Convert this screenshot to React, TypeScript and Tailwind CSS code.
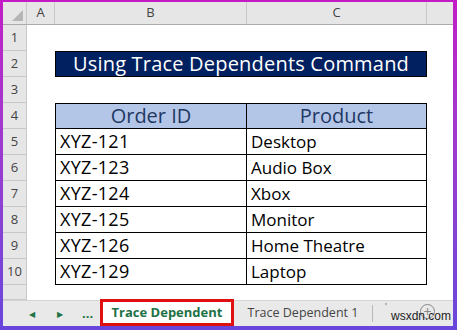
import React from 'react';

const rows = [
  { id: "XYZ-121", product: "Desktop" },
  { id: "XYZ-123", product: "Audio Box" },
  { id: "XYZ-124", product: "Xbox" },
  { id: "XYZ-125", product: "Monitor" },
  { id: "XYZ-126", product: "Home Theatre" },
  { id: "XYZ-129", product: "Laptop" },
];

const comic = { fontFamily: '"Comic Sans MS", "Open Sans", sans-serif' };

const RowHead: React.FC<{ n?: number; h?: string }> = ({ n, h = "h-[26px]" }) => (
  <div className={`w-[24px] ${h} shrink-0 bg-[#e6e6e6] border-r border-b border-[#c8c8c8] flex items-center justify-center text-[13px] text-[#444]`}>
    {n}
  </div>
);

const App: React.FC = () => {
  return <div className="w-[457px] h-[330px] bg-gradient-to-b from-[#c31ac6] to-[#6846dc] pt-[2px] pl-[3px] pr-[4px] pb-[4px]">
      <div className="w-full h-full bg-white flex flex-col overflow-hidden" style={{ fontFamily: '"Open Sans", "Noto Sans", sans-serif' }}>
        {/* column headers */}
        <div className="flex h-[23px] shrink-0 bg-[#e6e6e6] border-b border-[#ababab] text-[13px] text-[#444]">
          <div className="w-[24px] border-r border-[#c8c8c8] relative">
            <div className="absolute right-[3px] bottom-[3px] w-0 h-0 border-l-[11px] border-l-transparent border-b-[11px] border-b-[#b5b5b5]" />
          </div>
          <div className="w-[28px] border-r border-[#c8c8c8] flex items-center justify-center">A</div>
          <div className="w-[192px] border-r border-[#c8c8c8] flex items-center justify-center">B</div>
          <div className="w-[180px] border-r border-[#c8c8c8] flex items-center justify-center">C</div>
          <div className="flex-1" />
        </div>

        {/* row 1 */}
        <div className="flex"><RowHead n={1} /></div>

        {/* row 2: title */}
        <div className="flex">
          <RowHead n={2} />
          <div className="w-[28px]" />
          <div className="w-[372px] h-[26px] bg-[#002060] border border-black flex items-center justify-center text-white text-[20px] tracking-[0.2px]" style={comic}>
            Using Trace Dependents Command
          </div>
        </div>

        {/* row 3 */}
        <div className="flex"><RowHead n={3} /></div>

        {/* row 4: header */}
        <div className="flex">
          <RowHead n={4} />
          <div className="w-[28px]" />
          <div className="w-[192px] h-[26px] bg-[#b4c6e7] border border-black flex items-center justify-center text-[#1f3864] text-[20px]" style={comic}>Order ID</div>
          <div className="w-[180px] h-[26px] bg-[#b4c6e7] border-y border-r border-black flex items-center justify-center text-[#1f3864] text-[20px]" style={comic}>Product</div>
        </div>

        {rows.map((r, i) => <div key={r.id} className="flex">
            <RowHead n={i + 5} />
            <div className="w-[28px]" />
            <div className="w-[192px] h-[26px] border-l border-r border-b border-black flex items-center pl-[4px] text-black text-[18px] tracking-[0.3px]" style={comic}>{r.id}</div>
            <div className="w-[180px] h-[26px] border-r border-b border-black flex items-center pl-[4px] text-black text-[17px]" style={comic}>{r.product}</div>
          </div>)}

        {/* row 11 partial */}
        <div className="flex flex-1"><RowHead h="h-full" /></div>

        {/* sheet tabs */}
        <div className="h-[26px] shrink-0 bg-[#e9e9e9] border-t border-[#d4d4d4] flex items-stretch relative">
          <div className="w-[97px] flex items-center text-[#217346]">
            <span className="ml-[26px] text-[8px]">◀</span>
            <span className="ml-[22px] text-[8px]">▶</span>
            <span className="ml-[19px] text-[13px] font-bold leading-none">...</span>
          </div>
          <div className="w-[134px] bg-white border-[3px] border-[#e01010] -mt-[2px] flex items-center justify-center text-[13px] font-bold text-[#1e7145]">
            Trace Dependent
          </div>
          <div className="w-[138px] flex items-center justify-center text-[12.5px] text-[#444]">Trace Dependent 1</div>
          <div className="w-px bg-[#b8b8b8] my-[4px]" />
          <div className="flex-1 relative">
            <div className="absolute left-[12px] top-[1px] text-[9px] text-[#555] leading-none">'</div>
            <div className="absolute left-[47px] top-[3px] w-[15px] h-[15px] rounded-full border border-[#888] flex items-center justify-center text-[#888] text-[14px] leading-none">+</div>
            <div className="absolute left-[18px] top-[9px] text-[12px] leading-none text-[#222]" style={{ fontFamily: '"Liberation Sans", sans-serif' }}>wsxdn.com</div>
          </div>
        </div>
      </div>
    </div>;
};

export default App;
